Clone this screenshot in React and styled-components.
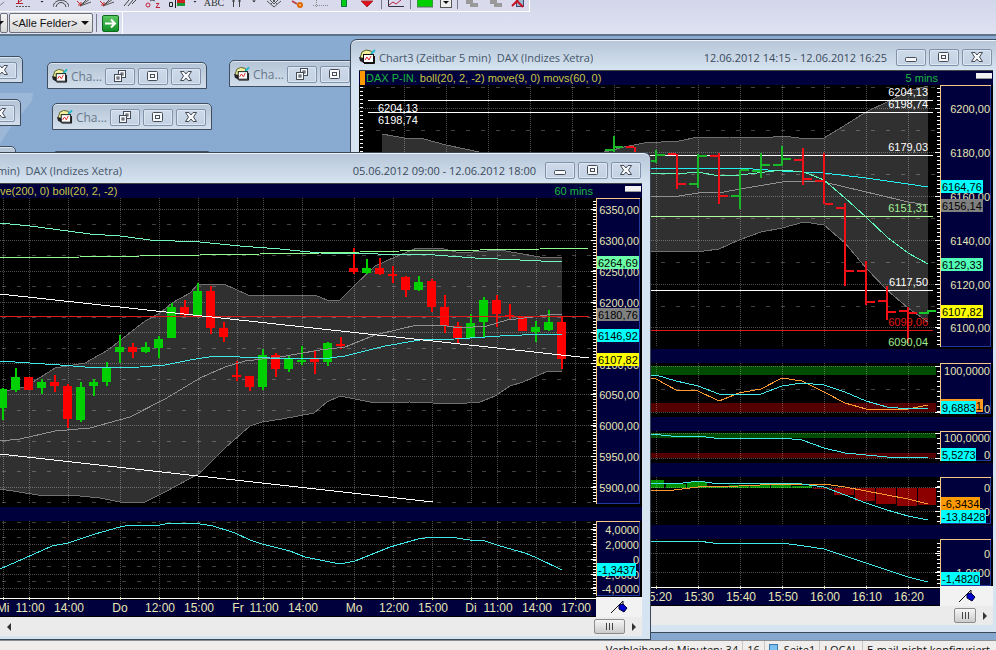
import styled, { createGlobalStyle } from 'styled-components'

const GlobalStyle = createGlobalStyle`
  * {
    box-sizing: border-box;
  }
  body {
    margin: 0;
    overflow: hidden;
    font-family: "Open Sans", "Liberation Sans", sans-serif;
  }
  button, select {
    font: inherit;
    margin: 0;
    padding: 0;
  }
`;

const Page = styled.div`
  height: 100vh;
  display: flex;
  flex-direction: column;
  background: #8aaad0;
`;

/* ---------- toolbars ---------- */

const Toolbars = styled.header`
  background: linear-gradient(#d2d6ea, #dfe2f2);
  border-bottom: 2px solid #5f7388;
`;
const IconBar = styled.div`
  width: 530px;
  height: 12px;
  display: flex;
  align-items: flex-start;
  background: #d9dbec;
  border-bottom: 1px solid #fff;
  border-right: 1px solid #fff;
`;
const ToolButton = styled.button`
  width: ${({ $w }) => $w}px;
  height: 9px;
  border: none;
  background: none;
  display: flex;
  justify-content: center;
`;
const ToolText = styled.span`
  font: 10px/6px "Liberation Serif", serif;
  height: 6px;
  color: #333;
`;
const Separator = styled.span`
  width: ${({ $w }) => $w}px;
  height: ${({ $h }) => $h}px;
  background: linear-gradient(#777a88, #777a88) center / 1px 100% no-repeat;
`;
const FieldBar = styled.div`
  width: 123px;
  height: 22px;
  display: flex;
  align-items: center;
  border-right: 1px solid #fff;
`;
const SelectWrap = styled.label`
  position: relative;
  width: ${({ $w }) => $w}px;
  height: 20px;
  margin-right: 1px;
  svg {
    position: absolute;
    right: 4px;
    top: 8px;
    pointer-events: none;
  }
`;
const Select = styled.select`
  appearance: none;
  display: block;
  width: 100%;
  height: 20px;
  padding-left: 2px;
  font: 11px "Liberation Sans", sans-serif;
  color: #111;
  border: 1px solid #6e7078;
  border-radius: 2px;
  background: linear-gradient(#f4f4f4, #d8d8d8);
`;
const GoButton = styled.button`
  width: 17px;
  height: 17px;
  margin-left: 4px;
  border: 1px solid #0b6a1d;
  border-radius: 2px;
  background: linear-gradient(#5cc864, #129028);
  display: flex;
`;

/* ---------- desktop and windows ---------- */

const Desktop = styled.main`
  position: relative;
  flex: 1;
  overflow: hidden;
  background: linear-gradient(#8aabd1, #87a8ce);
`;
const Wallpaper = styled.div`
  position: absolute;
  left: -36px;
  top: 30px;
  font: italic 118px "Liberation Sans", sans-serif;
  color: rgba(255, 255, 255, 0.16);
`;
const Frame = styled.section`
  position: absolute;
  left: ${({ $x }) => $x}px;
  top: ${({ $y }) => $y}px;
  width: ${({ $w }) => $w}px;
  padding: 0 8px ${({ $foot }) => $foot}px ${({ $flush }) => ($flush ? 0 : 8)}px;
  border: 1px solid #3a4858;
  border-width: 1px 1px 1px ${({ $flush }) => ($flush ? 0 : 1)}px;
  border-radius: ${({ $flush }) => ($flush ? '0 7px 0 0' : '7px 7px 0 0')};
  background: linear-gradient(#b6c6d8, #d6e3f0 30px);
  box-shadow: inset 0 1px 0 #eef4fa;
`;
const TitleBar = styled.div`
  height: 30px;
  padding: 4px 1px 0 0;
  display: flex;
  align-items: center;
  gap: 3px;
`;
const Title = styled.h2`
  margin: 0;
  flex: none;
  width: ${({ $w }) => ($w ? `${$w}px` : 'auto')};
  display: flex;
  justify-content: flex-end;
  overflow: hidden;
  white-space: pre;
  font-size: 11px;
  font-weight: 400;
  color: #44566a;
`;
const DateRange = styled.span`
  margin-left: auto;
  margin-right: 6px;
  white-space: nowrap;
  font-size: 11px;
  color: #3a4a5c;
`;
const CaptionButton = styled.button`
  flex: none;
  width: 30px;
  height: 17px;
  display: flex;
  align-items: center;
  justify-content: center;
  border: 1px solid #8292ad;
  border-radius: 2px;
  background: linear-gradient(#cedaea, #c3d1e2);
  box-shadow: inset 0 0 0 1px #dce6f1;
`;
const Content = styled.div`
  border-top: 1px solid #444;
  background: #000;
  svg {
    display: block;
  }
`;
const Legend = styled.div`
  height: 14px;
  display: flex;
  align-items: center;
  background: #00003c;
  font: 11px/14px "Liberation Sans", sans-serif;
  white-space: pre;
`;
const Marker = styled.span`
  width: 5px;
  height: 14px;
  margin: 0 1px 0 1px;
  background: #f90;
`;
const Symbol = styled.span`
  color: #1cb83c;
`;
const Formula = styled.span`
  color: #c8c840;
`;
const Period = styled.span`
  margin-left: auto;
  color: #1cb83c;
`;
const Grip = styled.span`
  width: 16px;
  height: 6px;
  margin: 0 1px 4px ${({ $space }) => $space}px;
  background: #f2f2f2;
  border-bottom: 1px solid #999;
`;
const Gap = styled.div`
  height: 14px;
  background: #00003c;
`;
const TimeRow = styled.div`
  display: flex;
  background: #f2f2f2;
`;
const PinButton = styled.button`
  flex: 1;
  border: none;
  background: #f2f2f2;
  display: flex;
  align-items: center;
  justify-content: center;
`;
const ScrollBar = styled.div`
  height: 19px;
  display: flex;
  align-items: center;
  background: #ebebeb;
`;
const ScrollButton = styled.button`
  width: 17px;
  height: 17px;
  border: none;
  background: none;
  display: flex;
  align-items: center;
  justify-content: center;
`;
const Thumb = styled.button`
  width: ${({ $w }) => $w}px;
  height: 15px;
  margin-left: auto;
  border: 1px solid #8c8c8c;
  border-radius: 2px;
  background: linear-gradient(#f6f6f6, #cbcbcb);
  display: flex;
  align-items: center;
  justify-content: center;
`;
const MiniFrame = styled.section`
  position: absolute;
  left: ${({ $x }) => $x}px;
  top: ${({ $y }) => $y}px;
  width: 160px;
  height: 27px;
  padding: 1px 5px 0 4px;
  display: flex;
  align-items: center;
  gap: 3px;
  border: 1px solid #3f4e60;
  border-radius: 5px 5px 0 0;
  background: linear-gradient(#b4c4d6, #d2deeb);
  box-shadow: inset 0 1px 0 #dce7f2;
`;
const MiniTitle = styled.span`
  flex: 1;
  font-size: 12px;
  color: #66788c;
`;

/* ---------- status bar ---------- */

const StatusBar = styled.footer`
  height: 10px;
  padding-right: 2px;
  overflow: hidden;
  display: flex;
  justify-content: flex-end;
  border-top: 1px solid #8b8f94;
  background: #f0eeec;
  font-size: 11px;
  line-height: 14px;
  color: #111;
`;
const StatusCell = styled.span`
  height: 20px;
  padding: 2px 4px 0;
  display: flex;
  gap: 6px;
  white-space: nowrap;
  border-left: 1px solid #c9c7c5;
  &:first-child {
    border-left: none;
  }
`;
const StatusIcon = styled.i`
  width: 9px;
  height: 9px;
  margin-top: 1px;
  border: 1px solid #3b78b4;
  background: #7cc0f0;
`;

/* ---------- small drawings ---------- */

const ChartIcon = () => (
  <svg width="17" height="16" viewBox="0 0 17 16">
    <path d="M1 9 L3 3 L7 1 L12 2 L13 6 L5 12 Z" fill="#f2f09a" stroke="#57602a" />
    <path d="M12 5 L16 1" stroke="#1ab8c8" strokeWidth="2" />
    <path d="M0 8 L5 9 L5 14 L1 12 Z" fill="#222" />
    <rect x="4.5" y="5.5" width="10" height="8" fill="#fff" stroke="#111" />
    <path d="M6 11 L8 8 L10 11 L12 7" fill="none" stroke="#d22" />
    <path d="M5 14.5 H15.5 V7" fill="none" stroke="#111" />
  </svg>
)

const Glyph = ({ kind }) => (
  <svg width="14" height="12" viewBox="0 0 14 12" stroke="#454c58" fill="#f6f8fa">
    {kind === 'min' && <rect x="1.5" y="6.5" width="11" height="4" rx="1" />}
    {kind === 'max' && (
      <>
        <rect x="1.5" y="1.5" width="10" height="9" rx="1" />
        <rect x="4.5" y="4.5" width="4" height="3" />
      </>
    )}
    {kind === 'restore' && (
      <>
        <rect x="5.5" y="0.5" width="7" height="7" />
        <rect x="8" y="3" width="2" height="2" />
        <rect x="1.5" y="4.5" width="7" height="7" />
        <rect x="4" y="7" width="2" height="2" />
      </>
    )}
    {kind === 'close' && (
      <path d="M1.5 1.5 H5 L7 4 L9 1.5 H12.5 L9.5 6 L12.5 10.5 H9 L7 8 L5 10.5 H1.5 L4.5 6 Z" />
    )}
  </svg>
)

const Caret = () => (
  <svg width="8" height="4" viewBox="0 0 8 4">
    <path d="M0 0 H8 L4 4 Z" fill="#111" />
  </svg>
)

const Pin = () => (
  <svg width="18" height="14" viewBox="0 0 18 14">
    <path d="M1 13 L13 1 V6" fill="none" stroke="#111" />
    <path d="M9 5 L13 4 L17 8 L14 12 L9 9 Z" fill="#00c" stroke="#003" />
  </svg>
)

const Arrow = ({ left }) => (
  <svg width="4" height="8" viewBox="0 0 4 8">
    <path d={left ? 'M4 0 V8 L0 4 Z' : 'M0 0 V8 L4 4 Z'} fill="#333" />
  </svg>
)

const tools = [
  { w: 11, name: 'Trend', d: <path d="M0 6 L6 1" stroke="#555" /> },
  { w: 25, name: 'Levels', d: <><path d="M0 3.5 H7 M2.5 0 V4 M3 2 L6 0" stroke="#b3202c" /><path d="M0 6.5 H15" stroke="#555" strokeDasharray="2 1" /></> },
  { w: 12, name: 'More levels', d: <path d="M6 0 H10 L8 2 Z" fill="#111" /> },
  { w: 25, name: 'Arcs', d: <path d="M0 7 C1 -2 15 -2 16 7 M3 7 C4 1 12 1 13 7" stroke="#444" /> },
  { w: 23, name: 'Fan', d: <><path d="M3 6 L9 0 M3 6 L14 2 M3 6 L13 -1" stroke="#555" /><path d="M0 1 L4 5 M4 2 V5 H1" stroke="#c22" /></> },
  { w: 23, name: 'Speed lines', d: <><path d="M3 6 L9 0 M3 6 L14 2 M3 6 L13 -1" stroke="#555" /><path d="M0 1 L4 5 M4 2 V5 H1" stroke="#c22" /></> },
  { w: 22, name: 'Channel', d: <path d="M2 6 L7 0 M6 6 L11 0 M10 4 L14 0" stroke="#444" /> },
  { w: 23, name: 'Count', d: <><circle cx="3" cy="5" r="2" stroke="#c2203a" /><path d="M11 3.5 H14 L11 7.5 H15" stroke="#c2203a" /><path d="M5 1 L7 0 L10 1" stroke="#555" /></> },
  { w: 25, name: 'Flag', d: <><path d="M0.5 2.5 H3.5 V6.5 H0.5 Z M6.5 0 V8" stroke="#222" /><rect x="8" y="0" width="8" height="3" fill="#c22" /><rect x="8" y="3" width="8" height="3" fill="#18963a" /></> },
  { w: 12, name: 'More flags', d: <path d="M6 0 H10 L8 2 Z" fill="#111" /> },
  { w: 26, name: 'Text', text: 'ABC' },
  { w: 20, name: 'Parallel', d: <path d="M4.5 0 V7 M10.5 0 V7 M3 1 H6 M9 1 H12" stroke="#444" /> },
  { w: 14, name: 'More lines', d: <path d="M6 0 H10 L8 2 Z" fill="#111" /> },
  { w: 26, name: 'Grid', d: <path d="M1 1 L8 7 L15 1 M4 0 L8 4 L12 0 M5 4 L9 0 M11 4 L7 0" stroke="#555" /> },
  { w: 22, name: 'Hand', d: <><path d="M2 1 L7 4" stroke="#b44" strokeWidth="2" /><circle cx="10" cy="5" r="2" fill="#fc6" stroke="#d60" strokeWidth="2" /></> },
  { w: 24, name: 'Axes', d: <path d="M3.5 0 V7 M0 5.5 H16" stroke="#888" strokeDasharray="1 1" /> },
  { w: 22, name: 'Up', d: <rect x="5.5" y="-1" width="5" height="7.5" fill="#0c1" stroke="#174" /> },
  { w: 23, name: 'Down', d: <path d="M2 1 H14 L8 7 Z" fill="#e01020" stroke="#a33" /> },
  { sep: true },
  { w: 23, name: 'Chart', d: <><path d="M0.5 0 V6.5 H16" stroke="#334" /><path d="M1 5 L5 2 L8 4 L13 0" stroke="#b24" /></> },
  { sep: true },
  { w: 24, name: 'Colour', d: <rect x="0" y="-1" width="16" height="8" fill="#00d000" stroke="#666" /> },
  { w: 17, name: 'Pick colour', d: <><rect x="2.5" y="-1" width="11" height="8.5" fill="#eee" stroke="#555" /><path d="M5 1 H11 L8 4 Z" fill="#111" /></> },
  { sep: true },
  { w: 24, name: 'Copy', d: <path d="M2 0 H9 V3 H14 V7 H6 V4 H2 Z" fill="#999" /> },
  { w: 23, name: 'Paste', d: <path d="M2 0 H9 V3 H14 V7 H6 V4 H2 Z" fill="#999" /> },
  { w: 21, name: 'Delete', d: <><rect x="6.5" y="-1" width="7" height="7.5" fill="#9bc" stroke="#447" /><path d="M2 6 L8 0 M7 1 L13 7" stroke="#c12" strokeWidth="2" /></> },
]

/* ---------- chart parts ---------- */

const GREEN = '#00d000'
const RED = '#ff0000'
const CYAN = '#40e8e8'
const ORANGE = '#ff9a30'
const FONT = '"Liberation Sans", sans-serif'

const Line = ({ pts, color }) => (
  <polyline points={pts} fill="none" stroke={color} shapeRendering="crispEdges" />
)

const Label = ({ x, y, color = '#e6e6b4', anchor = 'end', size = 11, children }) => (
  <text x={x} y={y} fill={color} textAnchor={anchor} fontSize={size} fontFamily={FONT}>
    {children}
  </text>
)

// chart: left edge, full width, x of the price axis and the vertical grid columns
const Panel = ({ chart, top, height, bottom, rows = [], dashed = [], tick, labels, tags = [], under, children }) => {
  const { left, width, axis, cols } = chart
  const right = left + width - 2
  const ticks = []
  for (let y = bottom - 3; y > top + 1; y -= tick) ticks.push(y)
  return (
    <svg width={width} height={height} viewBox={`${left} ${top} ${width} ${height}`}>
      <rect x={left} y={top} width={width} height={height} fill="#000" />
      {under}
      <g stroke="#fff" strokeOpacity="0.3" strokeDasharray="1 1" shapeRendering="crispEdges">
        {cols.map((x) => <line key={x} x1={x + 0.5} x2={x + 0.5} y1={top} y2={bottom} />)}
        {rows.map((y) => <line key={y} x1={left} x2={axis - 4} y1={y + 0.5} y2={y + 0.5} />)}
      </g>
      <g stroke="#fff" strokeOpacity="0.26" strokeDasharray="4 11" shapeRendering="crispEdges">
        {dashed.map((y) => <line key={y} x1={left + 2} x2={axis - 4} y1={y + 0.5} y2={y + 0.5} />)}
      </g>
      {children}
      <rect x={axis} y={top} width={right - axis} height={bottom - top} fill="#00003c" />
      <g fill="#fff">
        {ticks.map((y) => <rect key={y} x={axis - 3} y={y} width="3" height="1" />)}
        {rows.map((y) => <rect key={y} x={axis - 5} y={y} width="5" height="1" />)}
      </g>
      <path d={`M${right - 0.5} ${top + 1} V${bottom - 0.5} H${axis + 1}`} fill="none" stroke="#2038a0" />
      <rect x={axis} y={top} width="1" height={bottom - top} fill="#f6c886" />
      <rect x={axis} y={top} width={right - axis} height="1" fill="#f6c886" />
      {labels.map(([y, text]) => <Label key={y} x={right - 1} y={y + 4}>{text}</Label>)}
      {tags.map(([y, text, color, w]) => (
        <g key={text}>
          <rect x={axis + 1} y={y - 7} width={w} height="13" fill={color} />
          <Label x={axis + 2} y={y + 4} color="#000" anchor="start">{text}</Label>
        </g>
      ))}
    </svg>
  )
}

const TimeAxis = ({ chart, labels }) => {
  const { left, axis, cols } = chart
  return (
    <svg width={axis - left} height="20" viewBox={`${left} 0 ${axis - left} 20`}>
      <rect x={left} y="0" width={axis - left} height="20" fill="#000" />
      <rect x={left} y="3" width={axis - left} height="16" fill="#00003c" />
      <rect x={left} y="1" width={axis - left} height="1" fill="#fff" />
      {cols.map((x) => <rect key={x} x={x} y="0" width="1" height="3" fill="#e6e6b4" />)}
      {labels.map(([x, text]) => (
        <Label key={x} x={x} y="15" anchor="middle" size={12}>{text}</Label>
      ))}
    </svg>
  )
}

const Scroll = ({ thumb }) => (
  <ScrollBar>
    <ScrollButton aria-label="Scroll left"><Arrow left /></ScrollButton>
    <Thumb $w={thumb} aria-label="Scroll position">
      <svg width="9" height="7" viewBox="0 0 9 7">
        <path d="M1.5 0 V7 M4.5 0 V7 M7.5 0 V7" stroke="#444" />
      </svg>
    </Thumb>
    <ScrollButton aria-label="Scroll right"><Arrow /></ScrollButton>
  </ScrollBar>
)

const Caption = ({ kinds }) => kinds.map((kind) => (
  <CaptionButton key={kind} aria-label={kind}><Glyph kind={kind} /></CaptionButton>
))

/* ---------- 60 minute chart ---------- */

const hourly = {
  left: 0,
  width: 642,
  axis: 596,
  cols: [3, 29, 68, 120, 159, 198, 237, 263, 302, 354, 393, 432, 471, 497, 536, 575],
}

// x, body top, body bottom, wick top, wick bottom, rising
const candles = [
  [2, 389, 408, 388, 420, 1], [15, 377, 390, 368, 392, 1], [28, 377, 390, 377, 390, 0],
  [41, 382, 388, 379, 394, 1], [54, 382, 386, 375, 392, 0], [67, 386, 419, 384, 428, 0],
  [80, 387, 420, 382, 422, 1], [93, 382, 386, 379, 396, 1], [106, 368, 382, 362, 386, 1],
  [119, 347, 352, 335, 363, 1], [132, 347, 352, 343, 358, 0], [145, 347, 352, 342, 353, 1],
  [158, 339, 348, 336, 358, 1], [171, 307, 338, 303, 338, 1], [184, 307, 315, 300, 317, 0],
  [197, 291, 315, 283, 316, 1], [210, 291, 328, 286, 334, 0], [223, 328, 337, 322, 342, 0],
  [236, 375, 377, 361, 381, 0], [249, 376, 387, 376, 391, 0], [262, 355, 387, 349, 390, 1],
  [275, 355, 369, 353, 377, 0], [288, 359, 369, 355, 372, 1], [301, 360, 362, 346, 365, 1],
  [314, 359, 362, 350, 374, 0], [327, 343, 362, 342, 366, 1], [340, 344, 346, 337, 349, 0],
  [353, 268, 272, 248, 274, 0], [366, 268, 273, 259, 274, 1], [379, 268, 274, 258, 275, 0],
  [392, 274, 276, 266, 283, 0], [405, 277, 290, 276, 297, 0], [418, 282, 290, 276, 291, 1],
  [431, 281, 307, 279, 312, 0], [444, 307, 326, 295, 333, 0], [457, 326, 338, 322, 344, 0],
  [470, 323, 338, 314, 338, 1], [483, 300, 322, 297, 337, 1], [496, 300, 314, 295, 327, 0],
  [509, 315, 317, 304, 319, 0], [522, 316, 331, 316, 331, 0], [535, 327, 332, 321, 342, 1],
  [548, 322, 330, 310, 331, 1], [561, 322, 359, 316, 369, 0],
]

const hourlyBand =
  '0,392 25,387 55,368 85,363 108,350 145,321 160,313 172,303 190,293 198,284 224,284 248,295 315,295 327,300 340,300 355,285 375,266 395,257 417,248 440,248 460,253 500,250 540,257 562,257'
const hourlyBandLow =
  '562,371 548,371 523,382 510,386 495,396 480,402 455,404 410,402 375,403 340,396 327,402 314,413 282,419 262,422 250,426 225,448 200,473 165,492 145,502 120,502 100,498 70,495 38,495 0,489'

const HourlyWindow = () => (
  <Frame $x={0} $y={116} $w={651} $foot={3} $flush>
    <TitleBar>
      <Title $w={122}>{'min)  DAX (Indizes Xetra)'}</Title>
      <DateRange>05.06.2012 09:00 - 12.06.2012 18:00</DateRange>
      <Caption kinds={['min', 'max', 'close']} />
    </TitleBar>
    <Content>
      <Legend>
        <Formula>ve(200, 0) boll(20, 2, -2)</Formula>
        <Period>60 mins</Period>
        <Grip $space={32} />
      </Legend>
      <Panel
        chart={hourly}
        top={198}
        height={309}
        bottom={504}
        tick={3}
        rows={[209, 240, 271, 302, 332, 363, 394, 425, 456, 487]}
        dashed={[224, 255, 286, 317, 348, 379, 410, 441, 471, 502]}
        labels={[
          [210, '6350,00'], [241, '6300,00'], [272, '6250,00'], [303, '6200,00'], [334, '6150,00'],
          [365, '6100,00'], [395, '6050,00'], [426, '6000,00'], [457, '5950,00'], [488, '5900,00'],
        ]}
        tags={[
          [263, '6264,69', '#6cffa8', 42],
          [315, '6180,76', '#808080', 42],
          [336, '6146,92', '#00ffff', 42],
          [360, '6107,82', '#ffff00', 42],
        ]}
        under={<polygon points={`${hourlyBand} ${hourlyBandLow}`} fill="#303030" />}
      >
        <Line pts={hourlyBand} color="#707070" />
        <Line pts={hourlyBandLow} color="#707070" />
        {candles.map(([x, top, low, high, wick, up]) => (
          <g key={x} fill={up ? GREEN : RED} shapeRendering="crispEdges">
            <rect x={x - 4} y={top} width="9" height={low - top} />
            <rect x={x} y={high} width="2" height={wick - high} />
          </g>
        ))}
        <Line pts="0,441 20,439 55,431 90,428 130,417 165,399 200,378 225,367 245,361 280,357 320,350 345,347 375,335 417,325 447,326 460,328 487,326 507,320 533,317 547,315 562,314" color="#909090" />
        <Line pts="0,361 60,365 98,368 140,367 165,365 190,360 215,356 240,357 270,358 330,358 345,356 385,346 420,340 455,339 500,336 545,334 562,335" color={CYAN} />
        <Line pts="0,223 30,226 60,230 90,234 120,236 150,240 200,242 240,246 280,249 320,253 435,255 475,258 520,260 562,262" color="#70f8c0" />
        <Line pts="0,258 80,257 200,255 260,254 320,253 400,251 480,250 540,249 589,248" color="#90ff90" />
        <rect x="0" y="316" width="589" height="1" fill="#e01818" />
        <Line pts="0,294 589,358" color="#fff" />
        <Line pts="0,454 433,502" color="#fff" />
      </Panel>
      <Gap />
      <Panel
        chart={hourly}
        top={521}
        height={76}
        bottom={596}
        tick={3}
        rows={[529, 544, 559, 574, 588]}
        dashed={[522, 537, 551, 566, 581]}
        labels={[[530, '4,0000'], [545, '2,0000'], [560, '0'], [575, '-2,0000'], [589, '-4,0000']]}
        tags={[[570, '-1,3437', '#00ffff', 39]]}
      >
        <Line pts="0,569 25,558 52,546 68,543 95,534 120,527 130,525 160,525 170,523 200,524 213,526 235,533 250,540 262,544 290,551 305,557 340,564 355,561 390,547 418,539 432,537 450,537 470,540 485,541 500,546 525,553 537,558 562,570" color={CYAN} />
      </Panel>
      <TimeRow>
        <TimeAxis
          chart={hourly}
          labels={[
            [3, 'Mi'], [30, '11:00'], [69, '14:00'], [120, 'Do'], [160, '12:00'], [199, '15:00'],
            [238, 'Fr'], [264, '11:00'], [303, '14:00'], [354, 'Mo'], [394, '12:00'], [433, '15:00'],
            [471, 'Di'], [498, '11:00'], [537, '14:00'], [576, '17:00'],
          ]}
        />
        <PinButton aria-label="Pin"><Pin /></PinButton>
      </TimeRow>
      <Scroll thumb={31} />
    </Content>
  </Frame>
)

/* ---------- 5 minute chart ---------- */

const minutes = {
  left: 360,
  width: 634,
  axis: 941,
  cols: [405, 447, 489, 531, 573, 615, 657, 699, 741, 783, 825, 867, 909],
}

// x, high, low, open, close, rising
const bars = [
  [614, 136, 152, 150, 147, 1], [635, 147, 170, 147, 160, 0], [656, 150, 163, 161, 155, 1],
  [677, 154, 189, 154, 184, 0], [698, 154, 188, 184, 156, 1], [719, 153, 204, 156, 196, 0],
  [740, 170, 209, 196, 170, 1], [761, 153, 178, 171, 165, 1], [782, 146, 166, 165, 159, 1],
  [803, 148, 185, 160, 179, 0], [824, 153, 204, 181, 204, 0], [845, 203, 286, 208, 271, 0],
  [866, 261, 305, 271, 302, 0], [887, 286, 320, 301, 312, 0], [908, 307, 343, 311, 313, 0],
]

const minutesBand =
  '383,134 405,138 425,139 447,145 480,152 545,165 610,151 625,147 645,143 680,141 699,137 730,137 765,138 783,136 800,138 825,138 848,124 867,112 890,101 909,91 929,86'
const minutesBandLow =
  '929,322 909,308 888,290 867,268 846,243 825,225 805,222 783,228 762,232 740,240 720,249 705,251 383,251'

const histogram = [
  [645, 480, 8], [667, 484, 4], [688, 482, 6], [709, 486, 2], [730, 485, 3], [751, 485, 3],
  [772, 484, 4], [793, 486, 2], [814, 488, 1], [835, 488, 7], [856, 488, 13], [877, 488, 16],
  [898, 488, 18], [919, 488, 17],
]

const levels = [
  [100, '#fff'], [112, '#fff'], [155, '#fff'], [216, '#b4ffa0'], [290, '#fff'], [330, '#e01818'],
]

const Zones = ({ high, highSize, low, lowSize }) => (
  <>
    <rect x="360" y={high} width="577" height={highSize} fill="#004c00" />
    <rect x="360" y={low} width="577" height={lowSize} fill="#540000" />
  </>
)

const MinutesWindow = () => (
  <Frame $x={350} $y={3} $w={652} $foot={7}>
    <TitleBar>
      <ChartIcon />
      <Title>{'Chart3 (Zeitbar 5 min)  DAX (Indizes Xetra)'}</Title>
      <DateRange>12.06.2012 14:15 - 12.06.2012 16:25</DateRange>
      <Caption kinds={['min', 'max', 'close']} />
    </TitleBar>
    <Content>
      <Legend>
        <Marker />
        <Symbol>DAX P-IN. </Symbol>
        <Formula>boll(20, 2, -2) move(9, 0) movs(60, 0)</Formula>
        <Period>5 mins</Period>
        <Grip $space={38} />
      </Legend>
      <Panel
        chart={minutes}
        top={85}
        height={264}
        bottom={347}
        tick={4}
        rows={[108, 152, 196, 240, 284, 327]}
        dashed={[87, 130, 174, 218, 262, 306]}
        labels={[
          [109, '6200,00'], [153, '6180,00'], [197, '6160,00'], [241, '6140,00'], [285, '6120,00'], [328, '6100,00'],
        ]}
        tags={[
          [187, '6164,76', '#00ffff', 42],
          [206, '6156,14', '#808080', 42],
          [265, '6129,33', '#50ffb8', 42],
          [312, '6107,82', '#ffff00', 42],
        ]}
        under={<polygon points={`${minutesBand} ${minutesBandLow}`} fill="#303030" />}
      >
        <path d="M362.5 87 V347" stroke="#fff" strokeWidth="3" strokeDasharray="1 3" />
        <Line pts={minutesBand} color="#707070" />
        <Line pts={minutesBandLow} color="#707070" />
        <Line pts="652,196 680,196 699,193 725,192 741,189 783,182 805,181 825,182 846,187 880,195 909,202 929,205" color="#909090" />
        <Line pts="652,168 740,168 783,171 825,173 867,178 909,184 929,187" color="#20f0f0" />
        <Line pts="652,173 678,174 699,172 720,176 741,175 783,170 805,172 825,180 846,198 867,217 888,237 909,253 929,264" color="#60f8b8" />
        {levels.map(([y, color]) => (
          <rect key={y} x="369" y={y} width="565" height="1" fill={color} />
        ))}
        {bars.map(([x, high, low, open, close, up]) => (
          <g key={x} fill={up ? '#18b828' : '#f01018'} shapeRendering="crispEdges">
            <rect x={x} y={high} width="2" height={low - high} />
            <rect x={x - 8} y={open - 1} width="8" height="2" />
            <rect x={x + 2} y={close - 1} width="8" height="2" />
          </g>
        ))}
        <path d="M920 313 H929 V311 H937" fill="none" stroke="#18c828" strokeWidth="2" />
        <Label x={379} y={112} anchor="start" color="#fff">6204,13</Label>
        <Label x={379} y={124} anchor="start" color="#fff">6198,74</Label>
        <Label x={929} y={96} color="#fff">6204,13</Label>
        <Label x={929} y={108} color="#fff">6198,74</Label>
        <Label x={929} y={151} color="#fff">6179,03</Label>
        <Label x={929} y={212} color="#a0f090">6151,31</Label>
        <Label x={929} y={286} color="#fff">6117,50</Label>
        <Label x={929} y={326} color="#e01818">6099,06</Label>
        <Label x={929} y={346} color="#a0f090">6090,04</Label>
      </Panel>
      <Gap />
      <Panel
        chart={minutes}
        top={363}
        height={54}
        bottom={414}
        tick={5}
        rows={[366, 412]}
        dashed={[389]}
        labels={[[371, '100,0000'], [409, '0']]}
        tags={[[406, '17,1281', '#ff9a20', 42], [408, '9,6883', '#00ffff', 35]]}
        under={<Zones high={366} highSize={9} low={403} lowSize={9} />}
      >
        <Line pts="652,378 657,379 677,390 699,391 720,401 740,393 762,389 783,378 803,381 825,392 846,403 867,409 909,409 929,405" color={ORANGE} />
        <Line pts="652,375 657,375 677,381 699,386 720,394 762,394 783,386 803,383 825,385 846,392 867,401 888,407 909,409 929,408" color={CYAN} />
      </Panel>
      <Gap />
      <Panel
        chart={minutes}
        top={431}
        height={32}
        bottom={461}
        tick={5}
        rows={[433, 458]}
        labels={[[438, '100,0000'], [455, '0']]}
        tags={[[455, '5,5273', '#00ffff', 35]]}
        under={<Zones high={433} highSize={5} low={453} lowSize={5} />}
      >
        <Line pts="652,434 672,436 699,436 715,438 783,438 803,440 825,448 846,453 867,455 888,457 929,457" color={CYAN} />
      </Panel>
      <Gap />
      <Panel
        chart={minutes}
        top={477}
        height={48}
        bottom={524}
        tick={5}
        rows={[487, 511]}
        labels={[[488, '0'], [512, '-10,0000']]}
        tags={[[504, '-6,3434', '#ff9a00', 39], [517, '-13,8428', '#00ffff', 45]]}
        under={histogram.map(([x, y, h], i) => (
          <rect key={x} x={x} y={y} width={i === 13 ? 18 : 20} height={h} fill={i < 8 ? '#009000' : '#8c0000'} />
        ))}
      >
        <Line pts="652,490 675,490 699,487 740,486 783,484 825,484 846,487 867,491 909,499 929,504" color={ORANGE} />
        <Line pts="652,483 677,484 699,481 720,484 741,483 783,483 803,484 825,487 846,495 867,503 888,510 909,516 929,520" color={CYAN} />
      </Panel>
      <Gap />
      <Panel
        chart={minutes}
        top={539}
        height={47}
        bottom={586}
        tick={4}
        rows={[553, 572]}
        labels={[[554, '0'], [573, '-1,0000']]}
        tags={[[579, '-1,4820', '#00ffff', 39]]}
      >
        <Line pts="652,541 667,541 690,542 699,541 714,543 783,543 805,546 825,549 846,556 867,563 909,577 929,582" color={CYAN} />
      </Panel>
      <TimeRow>
        <TimeAxis
          chart={minutes}
          labels={[
            [658, '15:20'], [700, '15:30'], [742, '15:40'], [784, '15:50'], [826, '16:00'], [868, '16:10'], [910, '16:20'],
          ]}
        />
        <PinButton aria-label="Pin"><Pin /></PinButton>
      </TimeRow>
      <Scroll thumb={22} />
    </Content>
  </Frame>
)

const minis = [[-137, 20], [-139, 63], [-144, 110], [47, 26], [52, 67], [52, 115], [229, 24]]

const App = () => {
  return (
    <Page>
      <GlobalStyle />
      <Toolbars>
        <IconBar>
          {tools.map(({ w, name, d, text, sep }, i) => (
            sep ? <Separator key={i} $w={6} $h={9} /> : (
              <ToolButton key={i} $w={w} aria-label={name}>
                {text ? <ToolText>{text}</ToolText> : (
                  <svg width="16" height="8" viewBox="0 0 16 8" fill="none">{d}</svg>
                )}
              </ToolButton>
            )
          ))}
        </IconBar>
        <FieldBar>
          <SelectWrap $w={8}>
            <Select aria-label="Group" />
            <Caret />
          </SelectWrap>
          <SelectWrap $w={84}>
            <Select aria-label="Fields" defaultValue="all">
              <option value="all">&lt;Alle Felder&gt;</option>
            </Select>
            <Caret />
          </SelectWrap>
          <Separator $w={4} $h={18} />
          <GoButton aria-label="Go">
            <svg width="15" height="15" viewBox="0 0 15 15">
              <path d="M2 7.5 H12 M8 3.5 L12 7.5 L8 11.5" fill="none" stroke="#fff" strokeWidth="2" />
            </svg>
          </GoButton>
        </FieldBar>
      </Toolbars>
      <Desktop>
        <Wallpaper>7</Wallpaper>
        {minis.map(([x, y]) => (
          <MiniFrame key={`${x}/${y}`} $x={x} $y={y}>
            <ChartIcon />
            <MiniTitle>Cha...</MiniTitle>
            <Caption kinds={['restore', 'max', 'close']} />
          </MiniFrame>
        ))}
        <MinutesWindow />
        <HourlyWindow />
      </Desktop>
      <StatusBar>
        <StatusCell>Verbleibende Minuten: 34</StatusCell>
        <StatusCell>16</StatusCell>
        <StatusCell><StatusIcon />Seite1</StatusCell>
        <StatusCell>LOCAL</StatusCell>
        <StatusCell>E-mail nicht konfiguriert</StatusCell>
      </StatusBar>
    </Page>
  )
}

export default App
